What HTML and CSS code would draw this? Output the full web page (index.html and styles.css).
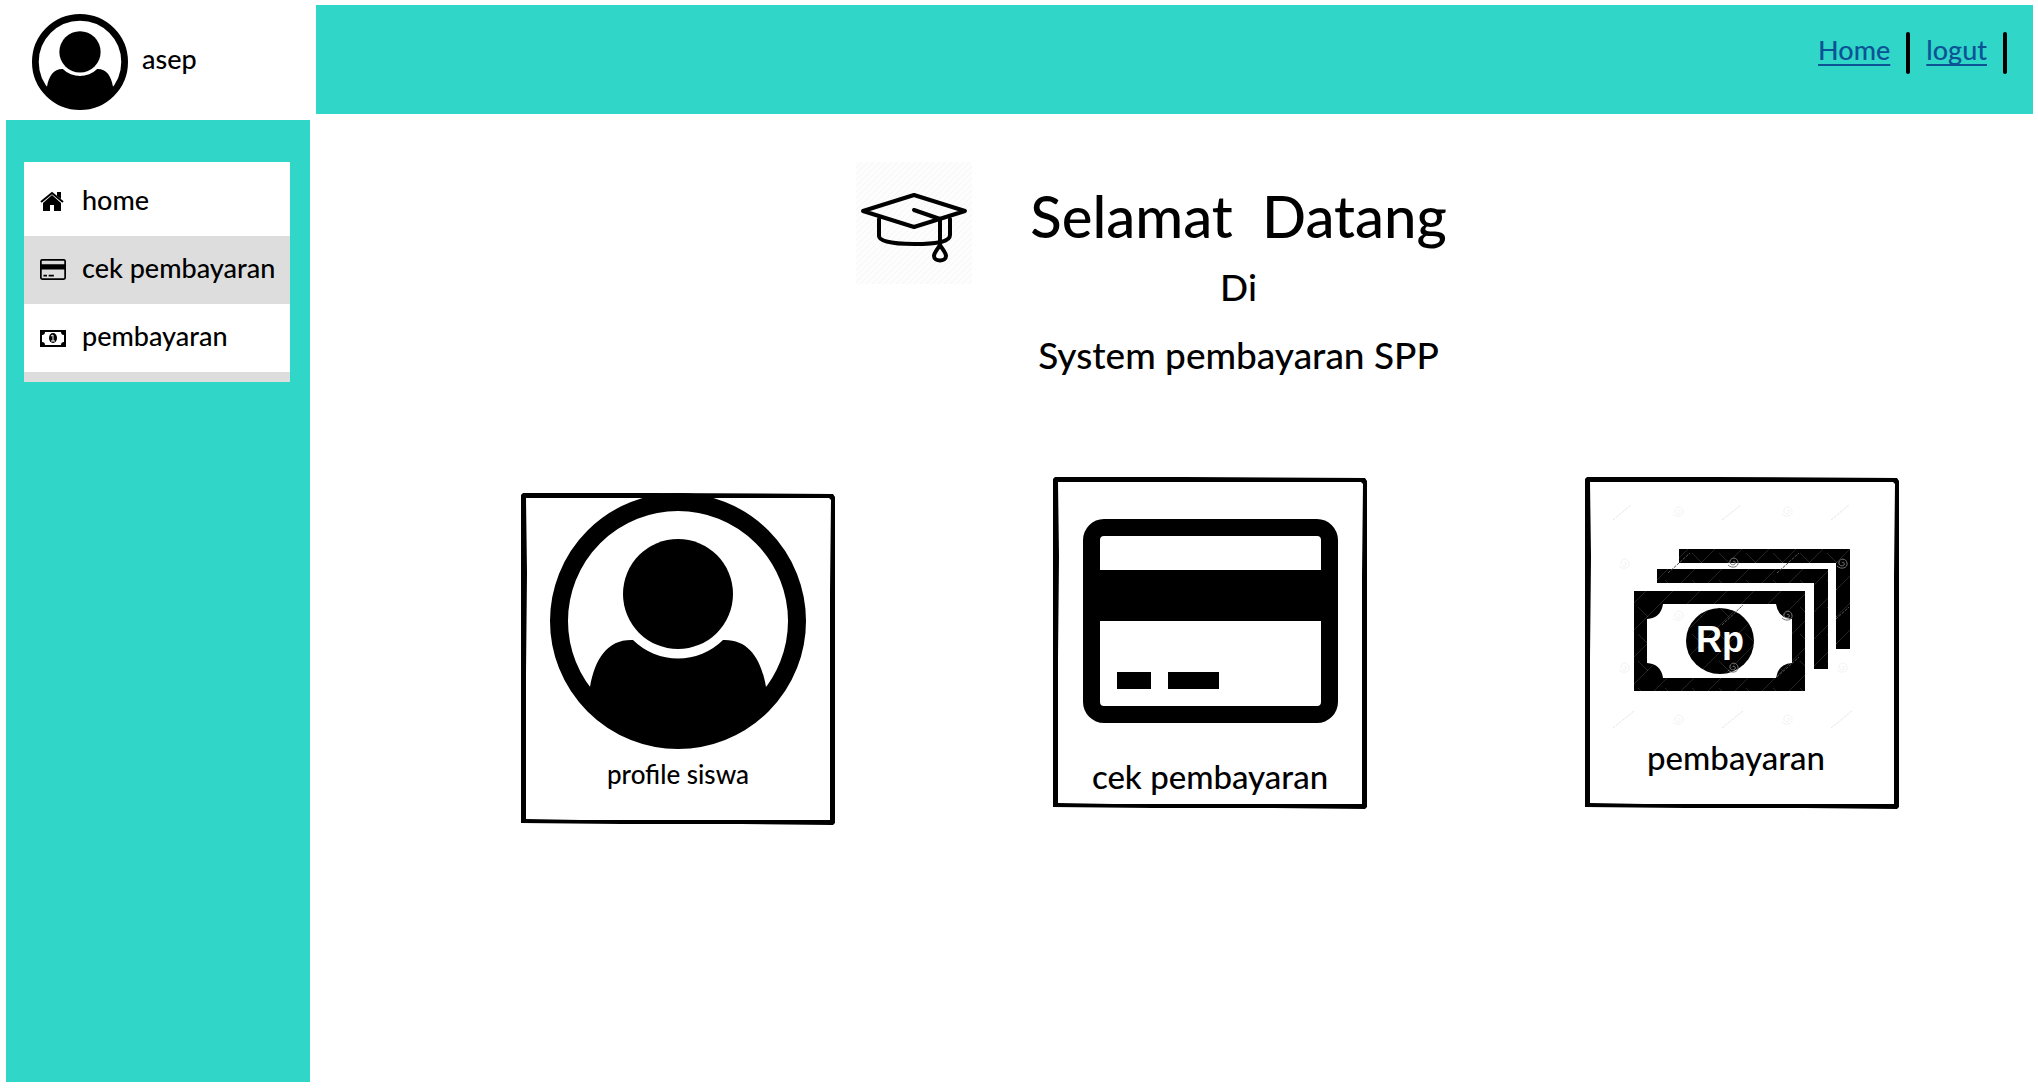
FILE: index.html
```html
<!DOCTYPE html>
<html lang="id">
<head>
<meta charset="utf-8">
<meta name="viewport" content="width=device-width, initial-scale=1">
<title>System pembayaran SPP</title>
<link rel="stylesheet" href="styles.css">
</head>
<body>
<svg class="defs" aria-hidden="true">
  <symbol id="user" viewBox="0 0 256 256">
    <circle cx="128" cy="128" r="119" fill="none" stroke="#000" stroke-width="18"/>
    <circle cx="128" cy="101" r="55"/>
    <path d="M40 194C45 165 58 146 83 147A64 64 0 0 0 173 147C198 146 211 165 216 194L216 200A115 115 0 0 1 40 200Z"/>
  </symbol>
  <symbol id="card" viewBox="0 0 255 204">
    <path fill-rule="evenodd" d="M21 0H234A21 21 0 0 1 255 21V183A21 21 0 0 1 234 204H21A21 21 0 0 1 0 183V21A21 21 0 0 1 21 0ZM21 17A4 4 0 0 0 17 21V51H238V21A4 4 0 0 0 234 17ZM17 102V183A4 4 0 0 0 21 187H234A4 4 0 0 0 238 183V102ZM34 153H68V170H34ZM85 153H136V170H85Z"/>
  </symbol>
  <symbol id="frame" viewBox="0 0 314 332" preserveAspectRatio="none">
    <path fill-rule="evenodd" d="M2 0L130 0L312 1L314 4L314 90L314 220L314 330L312 332L220 331L100 331L0 330L0 210L0 100L0 2ZM5 5L6 80L5 180L5 326L60 327L309 327L309 200L309 100L310 7L308 5L250 5L120 5Z"/>
  </symbol>
</svg>
<div class="shell">
  <div class="account">
    <svg class="avatar" aria-hidden="true"><use href="#user"/></svg>
    <span>asep</span>
  </div>
  <header class="topbar">
    <nav class="toplinks">
      <a href="#home">Home</a>
      <a href="#logout">logut</a>
    </nav>
  </header>
  <aside class="sidebar">
    <nav class="menu">
      <a class="item" href="#home">
        <svg viewBox="0 0 26 22" aria-hidden="true"><path d="M12 4L21 12V20H14V14H10V20H3V12Z"/><path d="M1 11L12 2L23 11" fill="none" stroke="#000" stroke-width="2"/><path d="M17 1H21V8L17 5Z"/></svg>
        <span>home</span>
      </a>
      <a class="item active" href="#cek">
        <svg viewBox="0 0 26 22" aria-hidden="true"><use href="#card" width="26" height="21"/></svg>
        <span>cek pembayaran</span>
      </a>
      <a class="item" href="#pembayaran">
        <svg viewBox="0 0 26 22" aria-hidden="true"><path fill-rule="evenodd" d="M0 3H26V20H0ZM5 5Q5 8 2 8V15Q5 15 5 18H21Q21 15 24 15V8Q21 8 21 5Z"/><ellipse cx="13" cy="11" rx="4" ry="5"/><path d="M11 9L13 8V14M11 14H15" fill="none" stroke="#fff" stroke-width="1"/></svg>
        <span>pembayaran</span>
      </a>
    </nav>
  </aside>
  <main class="content">
    <section class="hero">
      <svg class="cap" viewBox="0 0 116 122" aria-hidden="true">
        <defs><pattern id="hatch" width="6" height="6" patternUnits="userSpaceOnUse"><path d="M-1 7L7 -1M-1 1L1 -1M5 7L7 5" stroke="#f5f5f5" stroke-width="1"/></pattern></defs>
        <path d="M0 0H116V122H0Z" fill="#fdfdfd"/><path d="M0 0H116V122H0Z" fill="url(#hatch)"/>
        <g fill="none" stroke="#000" stroke-width="4" stroke-linejoin="round" stroke-linecap="round">
          <path d="M7 49L58 33L109 49L58 65Z"/>
          <path d="M23 57V74C23 78 31 82 58 82C84 82 94 79 94 73V57"/>
          <path d="M58 48L84 57V81"/>
          <path d="M84 83C81 88 78 91 78 94C78 100 90 100 90 94C90 91 87 88 84 83Z"/>
        </g>
      </svg>
      <div class="welcome">
        <h1>Selamat  Datang</h1>
        <p>Di</p>
        <p>System pembayaran SPP</p>
      </div>
    </section>
    <section class="cards">
      <a class="tile profile" href="#profile">
        <svg class="frame" aria-hidden="true"><use href="#frame"/></svg>
        <svg class="user-art" aria-hidden="true"><use href="#user"/></svg>
        <span>profile siswa</span>
      </a>
      <a class="tile check" href="#cek">
        <svg class="frame" aria-hidden="true"><use href="#frame"/></svg>
        <svg class="card-art" aria-hidden="true"><use href="#card"/></svg>
        <span>cek pembayaran</span>
      </a>
      <a class="tile pay" href="#pembayaran">
        <svg class="frame" aria-hidden="true"><use href="#frame"/></svg>
        <svg class="cash-art" viewBox="-22 -49 260 238" aria-hidden="true">
          <defs>
            <path id="swirl" d="M0 0C1 -2 3 0 2 2C0 4 -4 2 -3 -1C-2 -5 4 -5 5 0C6 5 -1 7 -5 3"/>
            <pattern id="lattice" width="27" height="27" patternUnits="userSpaceOnUse"><path d="M0 27L27 0M4 4L14 14" stroke="#fff" stroke-opacity=".14" stroke-width="1"/></pattern>
          </defs>
          <path d="M45 0H216V100H202V14H45ZM23 20H194V120H180V34H23Z"/>
          <path fill-rule="evenodd" d="M0 42H171V142H0ZM29 55Q27 69 13 70V114Q27 115 29 129H142Q144 115 158 114V70Q144 69 142 55Z"/>
          <ellipse cx="86" cy="92" rx="34" ry="33"/>
          <path d="M0 0H216V142H0Z" fill="url(#lattice)"/>
          <text class="rp" x="62" y="103">Rp</text>
          <g fill="none" stroke="#777" stroke-width="1">
            <use href="#swirl" x="99" y="13"/><use href="#swirl" x="208" y="14"/><use href="#swirl" x="153" y="66"/><use href="#swirl" x="99" y="118"/>
          </g>
          <g fill="none" stroke="#f3f3f3" stroke-width="1">
            <use href="#swirl" x="44" y="-38"/><use href="#swirl" x="153" y="-38"/><use href="#swirl" x="-10" y="14"/><use href="#swirl" x="44" y="66"/><use href="#swirl" x="-10" y="118"/><use href="#swirl" x="208" y="118"/><use href="#swirl" x="44" y="170"/><use href="#swirl" x="153" y="170"/>
            <path stroke="#e6e6e6" stroke-dasharray="3 1" d="M-21 -29L-3 -44M88 -29L107 -44M197 -29L215 -44M-21 179L0 162M88 179L109 162M197 179L218 162"/>
          </g>
          <path stroke="#555" stroke-dasharray="3 1" d="M34 24L56 4M143 24L165 4M88 76L109 56M202 70L215 58M143 128L165 108"/>
        </svg>
        <span>pembayaran</span>
      </a>
    </section>
  </main>
</div>
</body>
</html>
```
FILE: styles.css
```css
* { box-sizing: border-box; }

body {
  margin: 0;
  background: #fff;
  color: #000;
  font-family: Lato, "Liberation Sans", sans-serif;
  font-size: 27px;
  font-weight: 500;
  line-height: 32px;
}

a { color: inherit; text-decoration: none; }
svg { display: block; flex: none; }
.defs { position: absolute; width: 0; height: 0; }

.shell {
  display: grid;
  grid-template-columns: 304px 1fr;
  grid-template-rows: 109px 1fr;
  gap: 6px;
  min-height: 100vh;
  padding: 5px 5px 6px 6px;
}

.account {
  display: flex;
  align-items: center;
  gap: 14px;
  padding: 4px 0 0 26px;
}
.account span { padding-bottom: 6px; }
.avatar { width: 96px; height: 96px; }

.topbar { background: #30d6c8; }
.toplinks {
  display: flex;
  justify-content: flex-end;
  gap: 16px;
  padding: 27px 26px 0 0;
}
.toplinks a {
  display: flex;
  align-items: flex-start;
  gap: 16px;
  line-height: 36px;
  color: #0b5394;
  text-decoration: underline;
  text-decoration-thickness: 2px;
  text-underline-offset: 4px;
  text-decoration-skip-ink: none;
}
.toplinks a::after {
  content: "";
  width: 4px;
  height: 42px;
  border-radius: 2px;
  background: #000;
}

.sidebar {
  padding: 42px 20px 0 18px;
  background: #30d6c8;
}
.menu {
  padding-top: 6px;
  background: #fff;
  border-bottom: 10px solid #ddd;
}
.item {
  display: flex;
  align-items: center;
  gap: 16px;
  height: 68px;
  padding-left: 16px;
  white-space: nowrap;
}
.item svg { width: 26px; height: 22px; }
.item span { padding-bottom: 4px; }
.active { background: #ddd; }

.content { min-width: 0; }

.hero {
  display: flex;
  justify-content: center;
  gap: 58px;
  padding: 42px 46px 0 0;
}
.cap { width: 116px; height: 122px; }
.welcome { padding-top: 17px; text-align: center; }
.welcome h1 {
  margin: 0;
  font-size: 58px;
  font-weight: 500;
  line-height: 74px;
  white-space: pre;
}
.welcome p {
  margin: 0;
  font-size: 37px;
  line-height: 68px;
}

.cards {
  display: flex;
  flex-wrap: wrap;
  justify-content: space-between;
  gap: 32px;
  padding: 88px 134px 0 205px;
}
.tile {
  position: relative;
  display: flex;
  flex-direction: column;
  align-items: center;
  width: 314px;
  height: 332px;
  font-size: 33px;
}
.frame {
  position: absolute;
  inset: 0;
  width: 100%;
  height: 100%;
}
.profile { margin-top: 16px; gap: 9px; font-size: 26px; }
.check { padding-top: 42px; gap: 37px; }
.pay { padding-top: 23px; gap: 3px; }
.pay span { padding-right: 12px; }
.user-art { width: 256px; height: 256px; }
.card-art { width: 255px; height: 204px; }
.cash-art { width: 260px; height: 238px; }
.rp { font: bold 36px "Liberation Sans", sans-serif; fill: #fff; }
```
